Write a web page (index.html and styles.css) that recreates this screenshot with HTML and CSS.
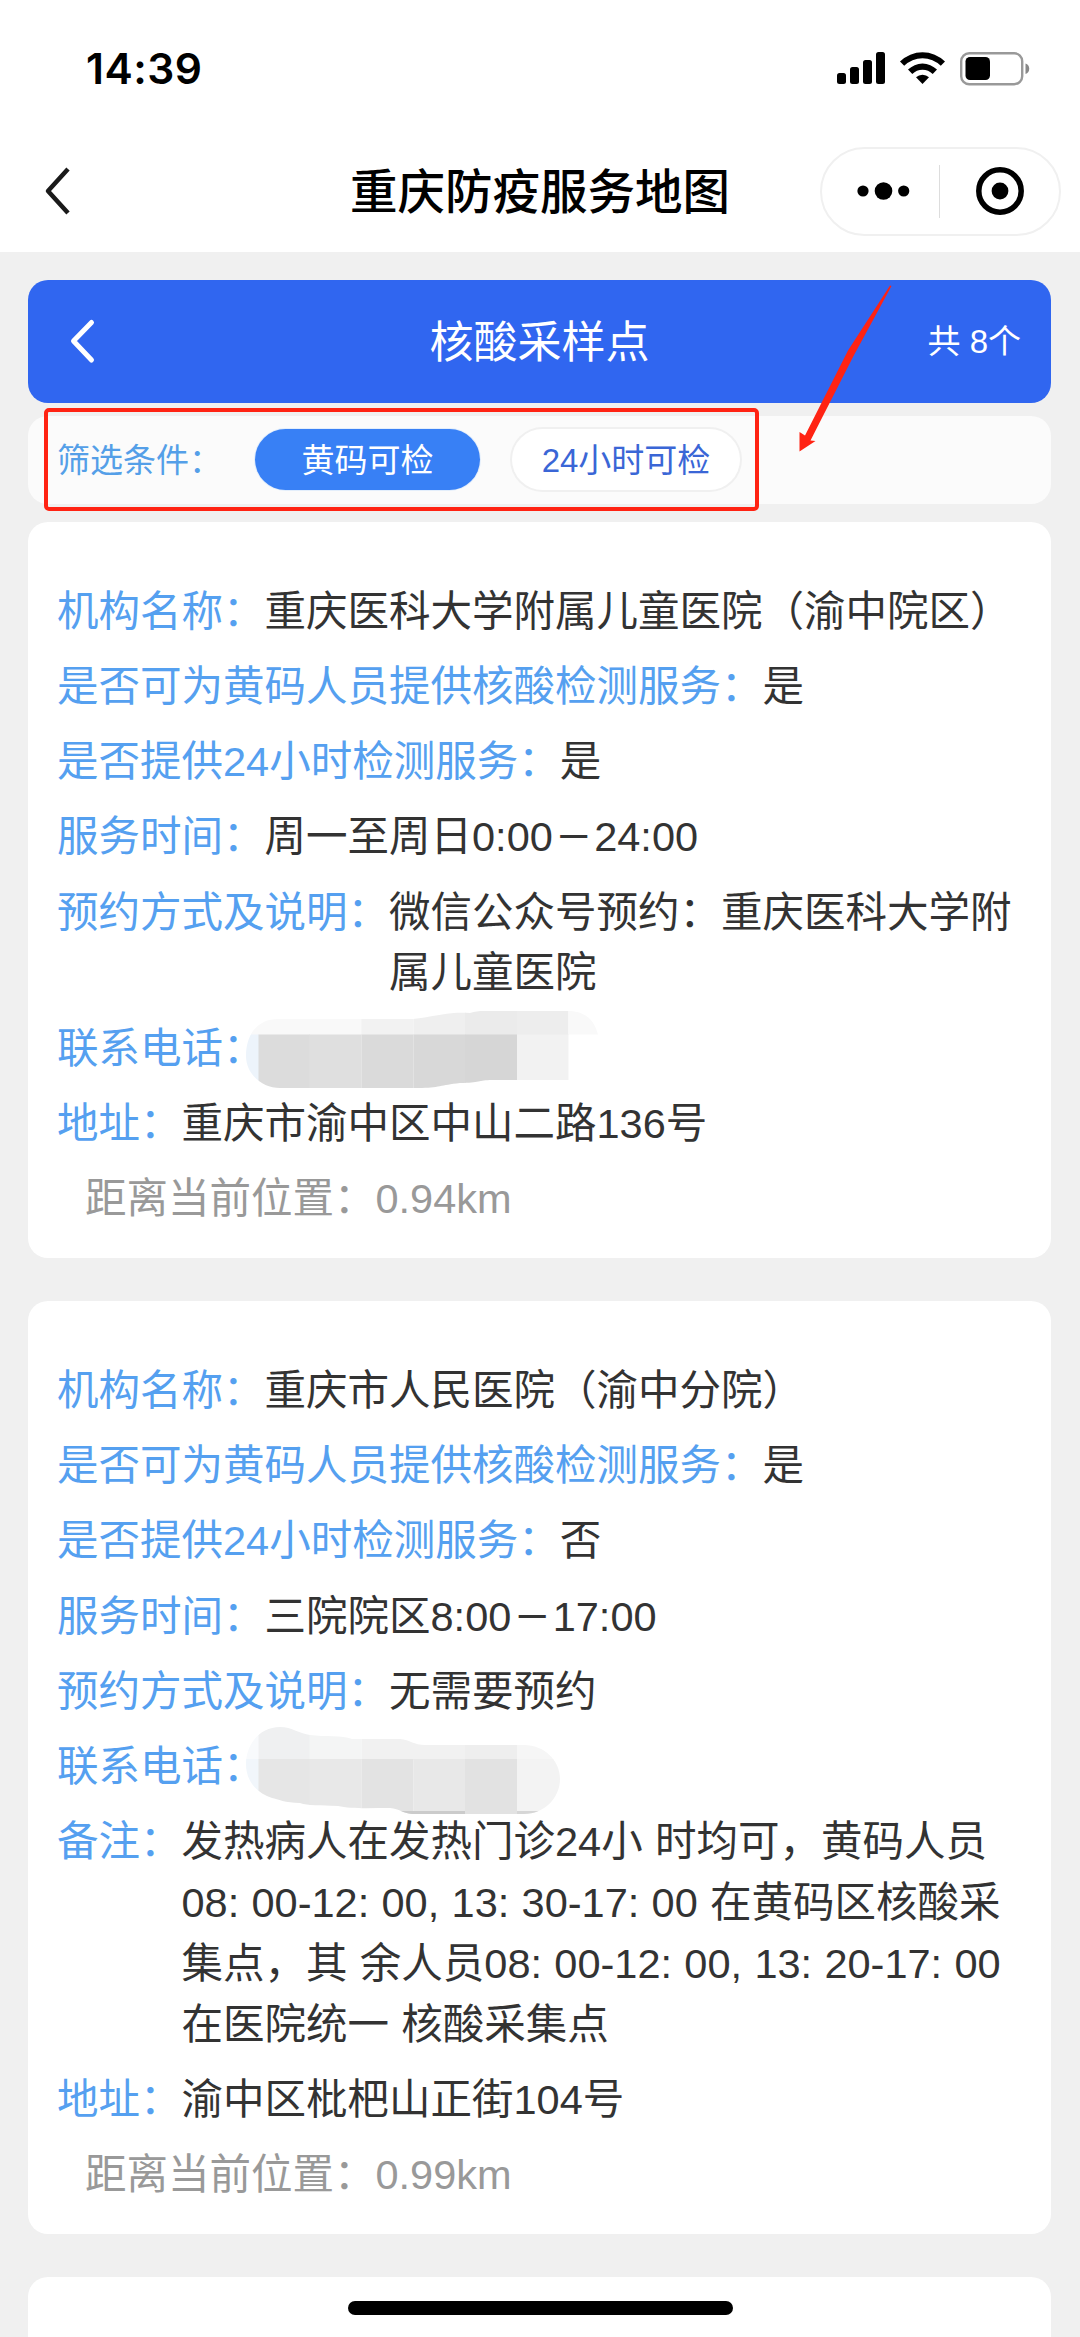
FILE: index.html
```html
<!DOCTYPE html>
<html lang="zh-CN">
<head>
  <meta charset="UTF-8" />
  <title>重庆防疫服务地图</title>
  <link rel="stylesheet" href="styles.css">
</head>
<body>

  <header class="top">
    <div class="status-bar">
      <span class="time">14:39</span>
      <svg class="status-icons" width="193" height="36" viewBox="0 0 193 36">
        <rect x="0" y="23" width="9" height="11" rx="2.5" />
        <rect x="13" y="17" width="9" height="17" rx="2.5" />
        <rect x="26" y="10" width="9" height="24" rx="2.5" />
        <rect x="39" y="2" width="9" height="32" rx="2.5" />
        <path d="M63 11.5a32 32 0 0 1 45 0l-4.2 4.3a26 26 0 0 0-36.6 0z" />
        <path d="M71 19.6a20.5 20.5 0 0 1 29 0l-4.3 4.3a14.4 14.4 0 0 0-20.4 0z" />
        <path d="M79 27.3a9.4 9.4 0 0 1 13 0L85.500 34z" />
        <rect x="124.200" y="3.200" width="61" height="31" rx="8" fill="none" stroke="#999" stroke-width="2.400" />
        <rect x="128.500" y="7" width="24.500" height="23" rx="4.500" />
        <path d="M188.500 13.500c5 1.500 5 9 0 10.500z" fill="#888" />
      </svg>
    </div>
    <div class="nav">
      <svg class="nav-back" width="30" height="52" viewBox="0 0 30 52">
        <path d="M27 4L7 26L27 48" fill="none" stroke="#1a1a1a" stroke-width="4.500" stroke-linejoin="round" />
      </svg>
      <h1 class="nav-title">重庆防疫服务地图</h1>
      <div class="capsule">
        <svg class="dots" width="54" height="20" viewBox="0 0 54 20">
          <circle cx="7" cy="10" r="5.600" />
          <circle cx="27.500" cy="10" r="8.800" />
          <circle cx="47.700" cy="10" r="5.600" />
        </svg>
        <span class="divider"></span>
        <svg class="target" width="50" height="50" viewBox="0 0 50 50">
          <circle cx="25" cy="25" r="21.200" fill="none" stroke="#000" stroke-width="5.500" />
          <circle cx="25" cy="25" r="8.400" />
        </svg>
      </div>
    </div>
  </header>

  <main class="page">
    <div class="banner">
      <svg class="banner-back" width="30" height="48" viewBox="0 0 30 48">
        <path d="M25.500 4.500L7.500 23L25.500 42" fill="none" stroke="#fff" stroke-width="5" stroke-linecap="round" stroke-linejoin="round" />
      </svg>
      <h2 class="banner-title">核酸采样点</h2>
      <span class="banner-count">共 8个</span>
    </div>

    <div class="filter">
      <span class="filter-label">筛选条件：</span>
      <button class="pill active">黄码可检</button>
      <button class="pill">24小时可检</button>
      <div class="highlight"></div>
      <svg class="arrow" width="100" height="172" viewBox="0 0 100 172">
        <path d="M98.500 4L60.500 74L17.500 158.500L22.500 159L6.500 169.500V150L12 153.500L55 68.500L97 3.500z" fill="#ff2313" />
      </svg>
    </div>

    <section class="card">
      <div class="row"><span class="label">机构名称：</span><span class="value">重庆医科大学附属儿童医院（渝中院区）</span></div>
      <div class="row"><span class="label">是否可为黄码人员提供核酸检测服务：</span><span class="value">是</span></div>
      <div class="row"><span class="label">是否提供24小时检测服务：</span><span class="value">是</span></div>
      <div class="row"><span class="label">服务时间：</span><span class="value">周一至周日0:00<span class="dash">—</span>24:00</span></div>
      <div class="row"><span class="label">预约方式及说明：</span><span class="value">微信公众号预约：重庆医科大学附属儿童医院</span></div>
      <div class="row">
        <span class="label">联系电话：</span>
        <svg class="mask mask-one" width="354" height="80" viewBox="246 1009 354 80">
          <clipPath id="maskOne">
            <path d="M246 1055C246 1033 258 1018 278 1018H413C440 1015 445 1011 470 1012C478 1010 480 1010 485 1010H568C584 1010 594 1018 598 1033.500H568.500V1079H492C478 1079 480 1082 460 1082C440 1084 440 1087 418 1087H280C262 1087 246 1073 246 1055Z" />
          </clipPath>
          <g clip-path="url(#maskOne)">
            <rect x="246" y="1009" width="116" height="25" fill="#f9f9f9" />
            <rect x="361.500" y="1009" width="52" height="25" fill="#f2f2f2" />
            <rect x="413.500" y="1009" width="52" height="25" fill="#efefef" />
            <rect x="465" y="1009" width="52" height="25" fill="#ebebeb" />
            <rect x="517" y="1009" width="51.500" height="25" fill="#ededed" />
            <rect x="568.500" y="1009" width="32" height="25" fill="#f9f9f9" />
            <rect x="246" y="1033.500" width="13" height="54" fill="#edf4fb" />
            <rect x="258.500" y="1033.500" width="51.500" height="54" fill="#dcdcdc" />
            <rect x="309.500" y="1033.500" width="52" height="54" fill="#dfdfdf" />
            <rect x="361.500" y="1033.500" width="52" height="54" fill="#dadada" />
            <rect x="413.500" y="1033.500" width="52" height="54" fill="#d8d8d8" />
            <rect x="465" y="1033.500" width="52" height="54" fill="#d6d6d6" />
            <rect x="517" y="1033.500" width="52" height="54" fill="#f2f2f2" />
          </g>
        </svg>
      </div>
      <div class="row"><span class="label">地址：</span><span class="value">重庆市渝中区中山二路136号</span></div>
      <div class="row distance">距离当前位置：0.94km</div>
    </section>

    <section class="card">
      <div class="row"><span class="label">机构名称：</span><span class="value">重庆市人民医院（渝中分院）</span></div>
      <div class="row"><span class="label">是否可为黄码人员提供核酸检测服务：</span><span class="value">是</span></div>
      <div class="row"><span class="label">是否提供24小时检测服务：</span><span class="value">否</span></div>
      <div class="row"><span class="label">服务时间：</span><span class="value">三院院区8:00<span class="dash">—</span>17:00</span></div>
      <div class="row"><span class="label">预约方式及说明：</span><span class="value">无需要预约</span></div>
      <div class="row">
        <span class="label">联系电话：</span>
        <svg class="mask mask-two" width="316" height="90" viewBox="246 1724 316 90">
          <clipPath id="maskTwo">
            <path d="M246 1762C246 1742 260 1725 280 1725C292 1725 300 1732 310 1733C325 1735 342 1733 352 1737H400C410 1738 414 1743 425 1743H524C544 1743 560 1758 560 1777C560 1796 544 1812 524 1812H412C402 1811 400 1807 390 1806C370 1806 350 1807 338 1804C320 1803 308 1804 300 1801C285 1801 278 1797 272 1796C258 1792 246 1780 246 1762Z" />
          </clipPath>
          <g clip-path="url(#maskTwo)">
            <rect x="246" y="1724" width="13" height="34" fill="#f8fafc" />
            <rect x="258.500" y="1724" width="51.500" height="34" fill="#eff0f1" />
            <rect x="309.500" y="1724" width="52" height="34" fill="#f4f5f5" />
            <rect x="361.500" y="1724" width="104" height="34" fill="#f1f1f1" />
            <rect x="465" y="1724" width="52" height="34" fill="#eee" />
            <rect x="517" y="1724" width="45" height="34" fill="#f6f6f6" />
            <rect x="246" y="1757" width="13" height="56" fill="#f1f6fb" />
            <rect x="258.500" y="1757" width="51.500" height="56" fill="#e6e6e6" />
            <rect x="309.500" y="1757" width="52" height="56" fill="#e8e8e8" />
            <rect x="361.500" y="1757" width="52" height="56" fill="#e3e3e3" />
            <rect x="413.500" y="1757" width="52" height="56" fill="#e8e8e8" />
            <rect x="465" y="1757" width="52" height="56" fill="#e2e2e2" />
            <rect x="517" y="1757" width="45" height="56" fill="#f3f3f3" />
            <rect x="396" y="1809" width="69" height="4" fill="#cbcbcb" />
            <rect x="517" y="1809" width="45" height="4" fill="#d6d6d6" />
          </g>
        </svg>
      </div>
      <div class="row"><span class="label">备注：</span><span class="value note">发热病人在发热门诊24小 时均可，黄码人员08: 00-12: 00, 13: 30-17: 00 在黄码区核酸采集点，其 余人员08: 00-12: 00, 13: 20-17: 00 在医院统一 核酸采集点</span></div>
      <div class="row"><span class="label">地址：</span><span class="value">渝中区枇杷山正街104号</span></div>
      <div class="row distance">距离当前位置：0.99km</div>
    </section>

    <section class="card card-next"></section>
  </main>

  <div class="home-bar"></div>

</body>
</html>
```

FILE: styles.css
```css
* {
  box-sizing: border-box;
}

html, body {
  margin: 0;
  padding: 0;
  height: 2337px;
  overflow: hidden;
  font-family: "Liberation Sans", "Noto Sans CJK SC", sans-serif;
  background: #f0f0f0;
  color: #333;
}

.top {
  height: 252px;
  background: #fff;
  color: #000;
}

.status-bar {
  height: 136px;
  padding: 0 50px 0 86px;
  display: flex;
  justify-content: space-between;
  align-items: center;
}

.time {
  font-family: Inter, sans-serif;
  font-size: 42.500px;
  font-weight: 600;
  letter-spacing: 0.500px;
}

.nav {
  height: 110px;
  padding: 0 19px 0 41px;
  display: grid;
  grid-template-columns: 241px 1fr 241px;
  align-items: center;
}

.nav-title {
  margin: 0;
  padding: 0 22px 5px 0;
  font-size: 47.500px;
  font-weight: 500;
  text-align: center;
  white-space: nowrap;
}

.capsule {
  height: 89px;
  border: 2px solid #f0f0f0;
  border-radius: 45px;
  display: flex;
  align-items: center;
}

.dots { margin-left: 34px; }

.divider {
  width: 1px;
  height: 53px;
  margin-left: 29px;
  background: #ddd;
}

.target { margin-left: 35px; }

.page {
  padding: 28px 29px 0 28px;
}

.banner {
  height: 123px;
  padding: 0 30px 0 38px;
  border-radius: 20px;
  background: #3066f0;
  color: #fff;
  display: grid;
  grid-template-columns: 160px 1fr 160px;
  align-items: center;
}

.banner-title {
  margin: 0;
  padding: 0 8px 6px 0;
  font-size: 44px;
  font-weight: 400;
  text-align: center;
}

.banner-count {
  padding-bottom: 5px;
  font-size: 33px;
  text-align: right;
}

.filter {
  position: relative;
  height: 88px;
  margin: 13px 0 18px;
  padding-left: 29px;
  border-radius: 20px;
  background: #fbfbfb;
  display: flex;
  align-items: center;
}

.filter-label {
  width: 198px;
  padding-bottom: 5px;
  font-size: 33px;
  color: #549fe8;
}

.pill {
  width: 225px;
  height: 61px;
  margin: 0 32px 1px 0;
  padding: 0 0 4px;
  border: 0;
  border-radius: 31px;
  background: #fff;
  box-shadow: 0 0 0 2px #f0f0f0;
  font: 33px "Liberation Sans", "Noto Sans CJK SC", sans-serif;
  color: #3a66d6;
}

.pill + .pill { width: 228px; }

.pill.active {
  background: #3880f5;
  box-shadow: 0 0 0 1px #e3eefb;
  color: #fff;
}

.highlight {
  position: absolute;
  left: 16px;
  top: -8px;
  width: 715px;
  height: 103px;
  border: 4.500px solid #ff2313;
  border-radius: 5px;
}

.arrow {
  position: absolute;
  left: 765px;
  top: -134px;
}

.card {
  margin-bottom: 43.500px;
  padding: 59.500px 29px 13px;
  border-radius: 20px;
  background: #fff;
  font-size: 41.500px;
  line-height: 60.800px;
}

.card-next { height: 120px; }

.row {
  position: relative;
  display: flex;
  margin-bottom: 14.500px;
}

.label {
  flex: none;
  color: #55a0f0;
}

.note {
  margin-right: -6px;
  word-spacing: 0.800px;
}

.distance {
  padding-left: 28px;
  color: #999;
}

.dash {
  padding: 0 4.500px;
  font-family: Roboto, sans-serif;
}

/* blurred-out phone numbers */
.mask {
  position: absolute;
  left: 189px;
}

.mask-one { top: -9px; }
.mask-two { top: -11px; }

.home-bar {
  position: fixed;
  left: 348px;
  bottom: 22px;
  width: 385px;
  height: 14px;
  border-radius: 7px;
  background: #000;
}
```
